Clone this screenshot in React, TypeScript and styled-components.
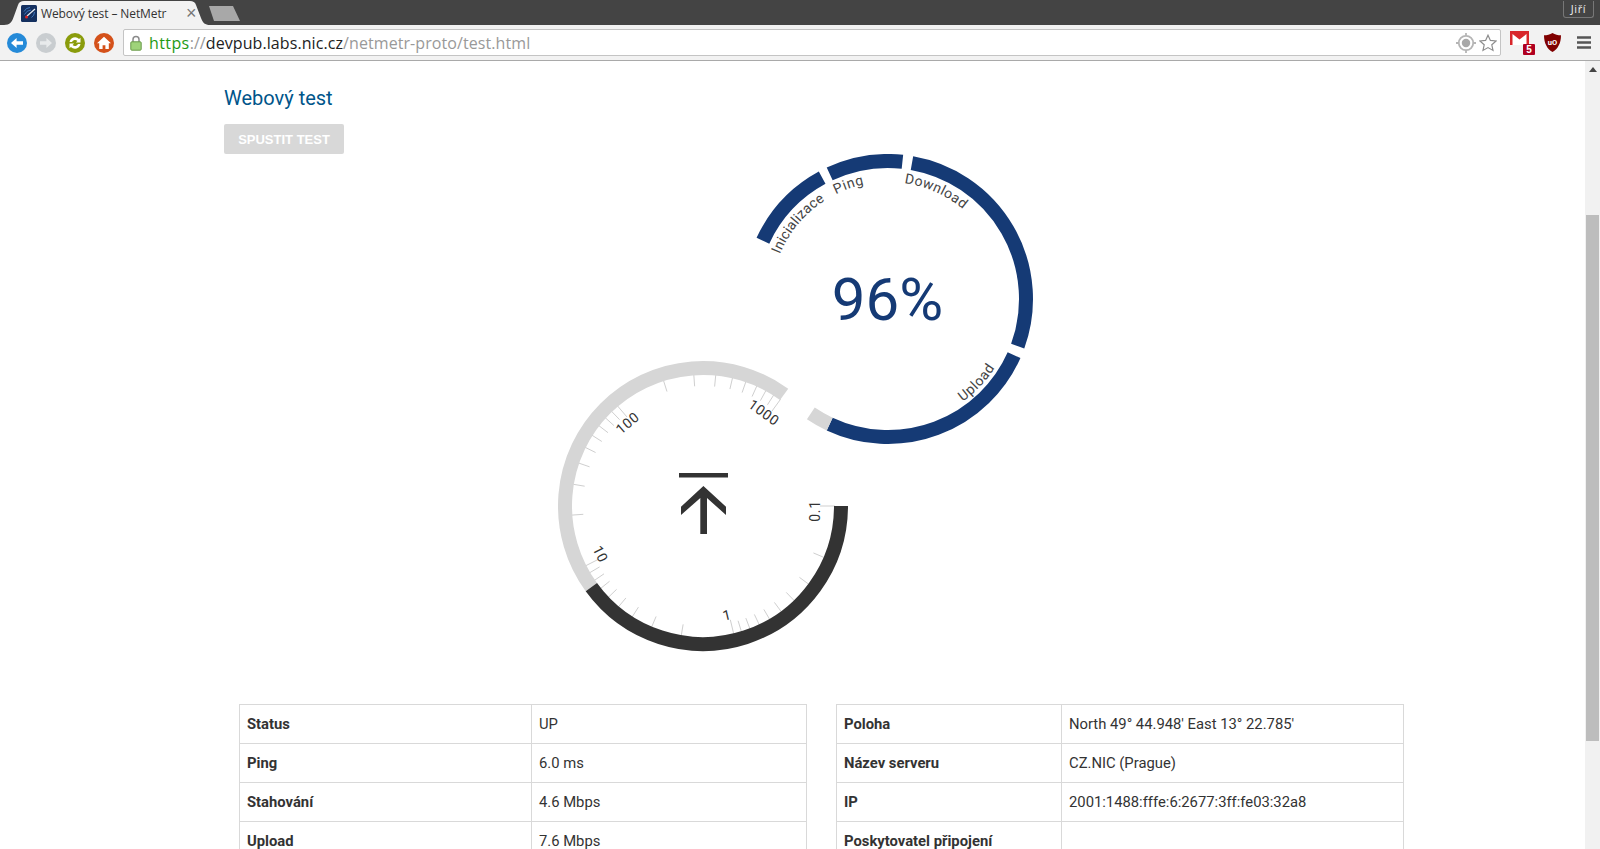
import React from "react";
import styled, { createGlobalStyle } from "styled-components";

const Global = createGlobalStyle`
  html, body { margin: 0; padding: 0; height: 849px; overflow: hidden; background: #fff; }
  #root { height: 849px; }
`;

const Browser = styled.div`
  width: 1600px; height: 849px; display: flex; flex-direction: column; overflow: hidden;
`;
const TabStrip = styled.div`
  height: 25px; background: #444; display: flex; align-items: flex-start; flex: none; position: relative;
`;
const ActiveTab = styled.div`
  width: 206px; height: 25px; margin-left: 4px; margin-top: 0; background: #f2f2f2; flex: none;
  clip-path: path('M0 25 C6 25 8 22 10 16 L14 5 C15 2 17 1 20 1 L186 1 C189 1 191 2 192 5 L197 18 C199 23 201 25 206 25 Z');
  display: flex; align-items: center; padding: 1px 0 0 17px; box-sizing: border-box;
`;
const TabTitle = styled.span`
  font: 12px "Open Sans", sans-serif; color: #333; margin-left: 4px; width: 147px; white-space: nowrap;
  letter-spacing: -0.1px;
`;
const TabClose = styled.span`
  font: 18px "Liberation Sans", sans-serif; color: #777; margin-left: -2px;
`;
const NewTab = styled.div`
  width: 31px; height: 15px; background: #a8a8a8; margin: 6px 0 0 -1px;
  clip-path: polygon(0 0, 24px 0, 31px 15px, 5px 15px);
`;
const UserChip = styled.div`
  margin-left: auto; margin-right: 6px; margin-top: 1px; height: 17px; width: 31px; box-sizing: border-box;
  border: 1px solid #777; border-top: none; border-radius: 0 0 3px 3px; color: #eee;
  font: 11px/15px "Open Sans", sans-serif; text-align: center; letter-spacing: .6px;
`;
const Toolbar = styled.div`
  height: 35px; background: #f2f2f2; border-bottom: 1px solid #a9a9a9; flex: none;
  display: flex; align-items: center; padding-left: 7px; box-sizing: content-box;
`;
const NavButton = styled.svg`
  width: 20px; height: 20px; margin-right: 9px; flex: none;
`;
const Omnibox = styled.div`
  width: 1378px; height: 27px; box-sizing: border-box; background: #fff; border: 1px solid #c4c4c4;
  border-radius: 2px; display: flex; align-items: center; padding-left: 6px; flex: none;
`;
const UrlText = styled.div`
  font: 16px "Open Sans", sans-serif; margin-left: 7px; color: #999; white-space: nowrap; letter-spacing: .08px;
`;
const UrlScheme = styled.span` color: #1f9a14; letter-spacing: .4px; `;
const UrlHost = styled.span` color: #222; `;
const OmniIcons = styled.div`
  margin-left: auto; display: flex; align-items: center; gap: 3px; padding-right: 3px;
`;
const ExtensionIcons = styled.div`
  display: flex; align-items: center; margin-left: 9px;
`;
const Gmail = styled.div`
  position: relative; width: 26px; height: 24px; margin-right: 8px;
`;
const Badge = styled.span`
  position: absolute; right: 1px; bottom: 0; width: 12px; height: 11px; background: #b00020; color: #fff;
  font: bold 10px/11px "Liberation Sans", sans-serif; text-align: center; border-radius: 1px;
`;
const Page = styled.div`
  flex: 1; display: flex; min-height: 0;
`;
const Content = styled.main`
  flex: 1; overflow: hidden; padding: 25px 0 0 224px; box-sizing: border-box; background: #fff;
`;
const Title = styled.h1`
  margin: 0; font: 400 20px/24px Roboto, sans-serif; color: #00558a;
`;
const RunButton = styled.button`
  display: block; margin-top: 14px; width: 120px; height: 30px; border: 0; border-radius: 2px; padding: 0;
  background: #d8d8d8; color: #fff; font: bold 13px "Liberation Sans", sans-serif;
`;
const Gauges = styled.svg`
  display: block; width: 480px; height: 500px; margin-left: 331px;
`;
const Tables = styled.div`
  display: flex; gap: 29px; margin: 50px 0 0 15px;
`;
const Table = styled.table<{ $first: number }>`
  border-collapse: collapse; width: 568px; table-layout: fixed; font: 14.8px Roboto, sans-serif; color: #333;
  th, td { border: 1px solid #d9d9d9; height: 39px; padding: 0 7px; text-align: left; box-sizing: border-box; }
  th { font-weight: 700; width: ${(p) => p.$first}px; }
  td { font-weight: 400; }
`;
const Scrollbar = styled.div`
  width: 15px; background: #f1f1f1; flex: none; display: flex; flex-direction: column; align-items: center;
`;
const ScrollUp = styled.div`
  width: 0; height: 0; margin-top: 6px; border: 4px solid transparent; border-top: 0; border-bottom: 5px solid #444;
`;
const ScrollThumb = styled.div`
  width: 13px; height: 526px; background: #bdbdbd; margin-top: 143px;
`;

const NAVY = "#153a75";
const DARK = "#333333";
const GREY = "#d6d6d6";

const pt = (cx: number, cy: number, r: number, a: number) => {
  const t = (a * Math.PI) / 180;
  return [cx + r * Math.cos(t), cy + r * Math.sin(t)];
};
const arc = (cx: number, cy: number, r: number, a0: number, a1: number) => {
  const [x0, y0] = pt(cx, cy, r, a0);
  const [x1, y1] = pt(cx, cy, r, a1);
  const large = Math.abs(a1 - a0) > 180 ? 1 : 0;
  const sweep = a1 > a0 ? 1 : 0;
  return `M${x0} ${y0}A${r} ${r} 0 ${large} ${sweep} ${x1} ${y1}`;
};

const RC = { x: 888, y: 299 };
const GC = { x: 703, y: 506 };
const DECADE = 76.5;

const segments: [number, number, string][] = [
  [205, 241.5, NAVY],
  [245, 276, NAVY],
  [280, 380, NAVY],
  [384, 475, NAVY],
  [475, 484, GREY],
];

const ticks: { a: number; major: boolean }[] = [{ a: 0, major: true }];
for (let d = 0; d < 4; d++) {
  for (let n = 2; n <= 10; n++) {
    ticks.push({ a: (d + Math.log10(n)) * DECADE, major: n === 10 });
  }
}

const scaleLabels: [string, number, number, number][] = [
  ["0.1", 815, 511, -90],
  ["1", 727, 615, -13.5],
  ["10", 600.5, 554, 63],
  ["100", 627.5, 423, -40.5],
  ["1000", 764, 412.5, 36],
];

const ringPaths = [
  { id: "l1", d: arc(RC.x, RC.y, 117, 202.5, 300), text: "Inicializace", spacing: 0.15 },
  { id: "l2", d: arc(RC.x, RC.y, 117, 243.5, 290), text: "Ping", spacing: 0.7 },
  { id: "l3", d: arc(RC.x, RC.y, 117, 278, 340), text: "Download", spacing: 0.35 },
  { id: "l4", d: arc(RC.x, RC.y, 127, 54, 0), text: "Upload", spacing: 0.6 },
];

const RingLabel = styled.text<{ $spacing: number }>`
  font: 14px Roboto, sans-serif; fill: #444; letter-spacing: ${(p) => p.$spacing}px;
`;
const ScaleLabel = styled.text`
  font: 14px Roboto, sans-serif; fill: #333; text-anchor: middle; dominant-baseline: central; letter-spacing: .6px;
`;
const Percent = styled.text`
  font: 400 60px Roboto, sans-serif; fill: ${NAVY}; text-anchor: middle;
`;

export default function App() {
  return (
    <Browser>
      <Global />
      <TabStrip>
        <ActiveTab>
          <svg width="16" height="17" viewBox="0 0 16 17">
            <rect width="16" height="17" rx="1.5" fill="#14305f" />
            <path d="M3 6.5A7 7 0 0 1 9 2.5M3.5 9.5A8 8 0 0 1 10 5M10.5 12.5A7 7 0 0 0 13.5 7" fill="none" stroke="#3f78c0" strokeWidth="1" />
            <path d="M6 11 L14 4" stroke="#e8edf5" strokeWidth="1.2" />
            <circle cx="5.5" cy="12" r="1.5" fill="#d22" />
          </svg>
          <TabTitle>Webový test – NetMetr</TabTitle>
          <TabClose>×</TabClose>
        </ActiveTab>
        <NewTab />
        <UserChip>Jiří</UserChip>
      </TabStrip>
      <Toolbar>
        <NavButton viewBox="0 0 20 20">
          <circle cx="10" cy="10" r="10" fill="#258ad8" />
          <path d="M16 8.3H9.6V5L4 10l5.6 5v-3.3H16z" fill="#fff" />
        </NavButton>
        <NavButton viewBox="0 0 20 20">
          <circle cx="10" cy="10" r="10" fill="#c9cdd0" />
          <path d="M4 8.3h6.4V5L16 10l-5.6 5v-3.3H4z" fill="#e8eaeb" />
        </NavButton>
        <NavButton viewBox="0 0 20 20">
          <circle cx="10" cy="10" r="10" fill="#8a9c0c" />
          <path d="M4.5 9a5.6 5.6 0 0 1 9.6-3l1.4-1.2V9.5h-4.6l1.5-1.6A3.3 3.3 0 0 0 7 9z M15.5 11a5.6 5.6 0 0 1-9.6 3l-1.4 1.2v-4.7h4.6L7.6 12.1A3.3 3.3 0 0 0 13 11z" fill="#fff" />
        </NavButton>
        <NavButton viewBox="0 0 20 20">
          <circle cx="10" cy="10" r="10" fill="#d4511a" />
          <path d="M10 3.8 3 10.2h2.2V16h3.4v-3.8h2.8V16h3.4v-5.8H17z" fill="#fff" />
        </NavButton>
        <Omnibox>
          <svg width="12" height="16" viewBox="0 0 12 16">
            <path d="M3 7V4.5a3 3 0 0 1 6 0V7" fill="none" stroke="#8a8a8a" strokeWidth="1.5" />
            <rect x="0.8" y="6.8" width="10.4" height="8.4" rx="1" fill="#9fd37a" stroke="#6a9a4a" />
          </svg>
          <UrlText>
            <UrlScheme>https</UrlScheme>://<UrlHost>devpub.labs.nic.cz</UrlHost>/netmetr-proto/test.html
          </UrlText>
          <OmniIcons>
            <svg width="20" height="20" viewBox="0 0 18 18">
              <circle cx="9" cy="9" r="6.5" fill="none" stroke="#b5b5b5" strokeWidth="1.6" />
              <circle cx="9" cy="9" r="3.8" fill="#a8a8a8" />
              <path d="M9 0v2.5M9 15.5V18M0 9h2.5M15.5 9H18" stroke="#b5b5b5" strokeWidth="1.6" />
            </svg>
            <svg width="18" height="18" viewBox="0 0 18 18">
              <path d="M9 1.2l2.4 5.2 5.7.6-4.3 3.8 1.2 5.6L9 13.6l-5 2.8 1.2-5.6L.9 7l5.7-.6z" fill="#fff" stroke="#8c8c8c" strokeWidth="1.2" />
            </svg>
          </OmniIcons>
        </Omnibox>
        <ExtensionIcons>
          <Gmail>
            <svg width="19" height="15" viewBox="0 0 19 15">
              <rect width="19" height="14" fill="#d8262b" />
              <path d="M2.5 14V3l7 5.5 7-5.5v11z" fill="#fff" />
              <path d="M2.5 0l7 5.5 7-5.5" fill="#d8262b" />
            </svg>
            <Badge>5</Badge>
          </Gmail>
          <svg width="17" height="19" viewBox="0 0 17 19" style={{ marginRight: 16 }}>
            <path d="M8.5 0C11 1.6 14 2.3 17 2.3 17 10 14 16 8.5 19 3 16 0 10 0 2.3 3 2.3 6 1.6 8.5 0z" fill="#800000" />
            <text x="8.5" y="11.5" textAnchor="middle" fontFamily="Roboto, sans-serif" fontWeight="700" fontSize="7.5" fill="#fff">uO</text>
          </svg>
          <svg width="14" height="13" viewBox="0 0 14 13">
            <path d="M0 1.5h14M0 6.5h14M0 11.5h14" stroke="#555" strokeWidth="2.6" />
          </svg>
        </ExtensionIcons>
      </Toolbar>
      <Page>
        <Content>
          <Title>Webový test</Title>
          <RunButton disabled>SPUSTIT TEST</RunButton>
          <Gauges viewBox="555 154 480 500">
            <defs>
              {ringPaths.map((p) => (
                <path key={p.id} id={p.id} d={p.d} fill="none" />
              ))}
            </defs>
            {segments.map(([a0, a1, c], i) => (
              <path key={i} d={arc(RC.x, RC.y, 138, a0, a1)} fill="none" stroke={c} strokeWidth="14" />
            ))}
            {ringPaths.map((p) => (
              <RingLabel key={p.id} $spacing={p.spacing}>
                <textPath href={`#${p.id}`}>{p.text}</textPath>
              </RingLabel>
            ))}
            <Percent x={RC.x - 0.5} y={320}>96%</Percent>

            {ticks.map((t, i) => {
              const inner = t.major ? 117 : 120;
              const [x0, y0] = pt(GC.x, GC.y, inner, t.a);
              const [x1, y1] = pt(GC.x, GC.y, 132, t.a);
              return <line key={i} x1={x0} y1={y0} x2={x1} y2={y1} stroke="#cfcfcf" strokeWidth="1" />;
            })}
            <path d={arc(GC.x, GC.y, 138, 144, 306)} fill="none" stroke={GREY} strokeWidth="14" />
            <path d={arc(GC.x, GC.y, 138, 0, 144)} fill="none" stroke={DARK} strokeWidth="14" />
            {scaleLabels.map(([s, x, y, r]) => (
              <ScaleLabel key={s} x={x} y={y} transform={`rotate(${r} ${x} ${y})`}>{s}</ScaleLabel>
            ))}
            <rect x="679" y="473" width="49" height="4.5" fill={DARK} />
            <path d="M700.3 534V498L681 515V506.7L703.4 486 726 506.7V515L707 498V534z" fill={DARK} />
          </Gauges>
          <Tables>
            <Table $first={292}>
              <tbody>
                <tr><th>Status</th><td>UP</td></tr>
                <tr><th>Ping</th><td>6.0 ms</td></tr>
                <tr><th>Stahování</th><td>4.6 Mbps</td></tr>
                <tr><th>Upload</th><td>7.6 Mbps</td></tr>
              </tbody>
            </Table>
            <Table $first={225}>
              <tbody>
                <tr><th>Poloha</th><td>North 49° 44.948' East 13° 22.785'</td></tr>
                <tr><th>Název serveru</th><td>CZ.NIC (Prague)</td></tr>
                <tr><th>IP</th><td>2001:1488:fffe:6:2677:3ff:fe03:32a8</td></tr>
                <tr><th>Poskytovatel připojení</th><td></td></tr>
              </tbody>
            </Table>
          </Tables>
        </Content>
        <Scrollbar>
          <ScrollUp />
          <ScrollThumb />
        </Scrollbar>
      </Page>
    </Browser>
  );
}
